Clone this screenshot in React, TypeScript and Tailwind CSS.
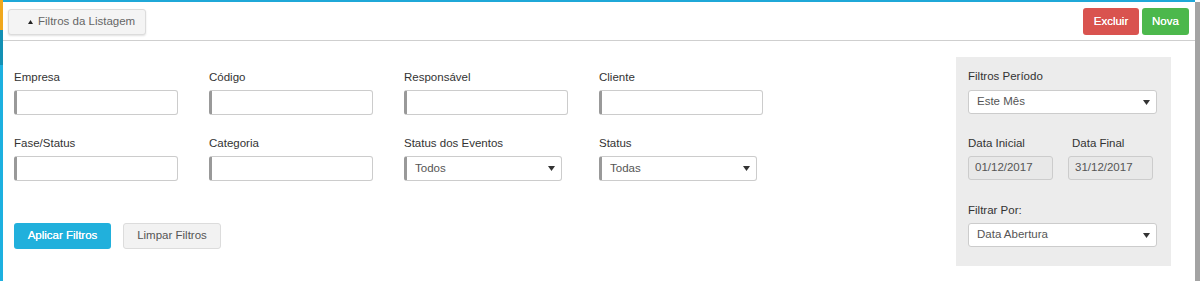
import React from "react";

const font = { fontFamily: '"Liberation Sans", Arial, sans-serif' };

function Caret() {
  return (
    <svg width="7" height="5" viewBox="0 0 7 5" className="shrink-0">
      <path d="M0 0 L7 0 L3.5 5 Z" fill="#333" />
    </svg>
  );
}

function Field({ label, w = "w-[164px]" }: { label: string; w?: string }) {
  return (
    <div className="flex flex-col">
      <div className="h-[14px] leading-[14px] text-[11.5px] text-[#333] mb-[6px]">{label}</div>
      <div className={`${w} h-[25px] border border-[#ccc] border-l-[3px] border-l-[#999] rounded-[3px] bg-white`} />
    </div>
  );
}

function SelectField({ label, value }: { label: string; value: string }) {
  return (
    <div className="flex flex-col">
      <div className="h-[14px] leading-[14px] text-[11.5px] text-[#333] mb-[6px]">{label}</div>
      <div className="w-[158px] h-[25px] border border-[#ccc] border-l-[3px] border-l-[#999] rounded-[3px] bg-white flex items-center justify-between pl-[8px] pr-[6px]">
        <span className="text-[11.5px] text-[#555]">{value}</span>
        <Caret />
      </div>
    </div>
  );
}

function PanelSelect({ value }: { value: string }) {
  return (
    <div className="w-[189px] h-[24px] border border-[#ccc] rounded-[3px] bg-white flex items-center justify-between pl-[8px] pr-[6px]">
      <span className="text-[11.5px] text-[#555]">{value}</span>
      <Caret />
    </div>
  );
}

export default function App() {
  return (
    <div className="flex w-[1200px] h-[281px] bg-white overflow-hidden" style={font}>
      <div className="w-[3px] flex flex-col shrink-0">
        <div className="h-[30px] bg-[#f0a81e]" />
        <div className="h-[35px] bg-[#1390b4]" />
        <div className="flex-1 bg-[#1db0e0]" />
      </div>
      <div className="flex-1 flex flex-col border-t-2 border-[#1fa8d8]">
        <div className="h-[39px] border-b border-[#cfcfcf] flex items-center justify-between pl-[5px] pr-[6px] shrink-0">
          <div className="h-[26px] w-[138px] mt-[2px] border border-[#dcdcdc] rounded-[3px] bg-[#f4f4f4] shadow-[0_1px_2px_rgba(0,0,0,0.12)] flex items-center pl-[19px] gap-[5px]">
            <svg width="5" height="4" viewBox="0 0 5 4"><path d="M0 4 L5 4 L2.5 0 Z" fill="#222" /></svg>
            <span className="text-[11.5px] text-[#666]">Filtros da Listagem</span>
          </div>
          <div className="flex gap-[3px] mt-[1px]">
            <div className="w-[56px] h-[27px] rounded-[3px] bg-[#d9534f] text-white text-[11.5px] flex items-center justify-center [text-shadow:0_0_0.4px_#fff]">Excluir</div>
            <div className="w-[47px] h-[27px] rounded-[3px] bg-[#4cb84c] text-white text-[11.5px] flex items-center justify-center [text-shadow:0_0_0.4px_#fff]">Nova</div>
          </div>
        </div>
        <div className="flex flex-1">
          <div className="flex-1 pl-[11px] pt-[29px]">
            <div className="grid grid-cols-[164px_164px_164px_164px] gap-x-[31px] gap-y-[21px]">
              <Field label="Empresa" />
              <Field label="Código" />
              <Field label="Responsável" />
              <Field label="Cliente" />
              <Field label="Fase/Status" />
              <Field label="Categoria" />
              <SelectField label="Status dos Eventos" value="Todos" />
              <SelectField label="Status" value="Todas" />
            </div>
            <div className="flex gap-[12px] mt-[42px]">
              <div className="w-[97px] h-[26px] rounded-[3px] bg-[#21b0dc] text-white text-[11.5px] flex items-center justify-center [text-shadow:0_0_0.4px_#fff]">Aplicar Filtros</div>
              <div className="w-[98px] h-[26px] rounded-[3px] bg-[#f2f2f2] border border-[#dcdcdc] text-[#555] text-[11.5px] flex items-center justify-center">Limpar Filtros</div>
            </div>
          </div>
          <div className="w-[215px] h-[209px] mt-[16px] mr-[24px] bg-[#ececec] pl-[12px] pt-[12px] flex flex-col">
            <div className="h-[14px] leading-[14px] text-[11.5px] text-[#333] mb-[7px]">Filtros Período</div>
            <PanelSelect value="Este Mês" />
            <div className="flex gap-[15px] mt-[22px]">
              <div className="flex flex-col">
                <div className="h-[14px] leading-[14px] text-[11.5px] text-[#333] mb-[6px]">Data Inicial</div>
                <div className="w-[85px] h-[24px] border border-[#ccc] rounded-[3px] bg-[#e8e8e8] flex items-center pl-[6px] text-[11.5px] text-[#555]">01/12/2017</div>
              </div>
              <div className="flex flex-col">
                <div className="h-[14px] leading-[14px] text-[11.5px] text-[#333] mb-[6px] pl-[4px]">Data Final</div>
                <div className="w-[85px] h-[24px] border border-[#ccc] rounded-[3px] bg-[#e8e8e8] flex items-center pl-[6px] text-[11.5px] text-[#555]">31/12/2017</div>
              </div>
            </div>
            <div className="h-[14px] leading-[14px] text-[11.5px] text-[#333] mb-[6px] mt-[23px]">Filtrar Por:</div>
            <PanelSelect value="Data Abertura" />
          </div>
        </div>
      </div>
      <div className="w-[5px] mt-[2px] bg-[#a3a3a3] shrink-0" />
    </div>
  );
}
